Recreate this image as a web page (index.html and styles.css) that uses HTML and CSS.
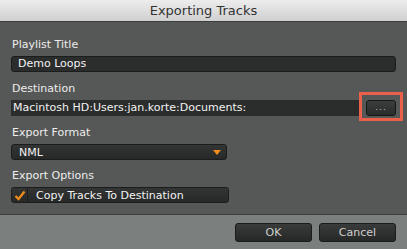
FILE: index.html
```html
<!DOCTYPE html>
<html lang="en">
<head>
  <meta charset="UTF-8">
  <title>Exporting Tracks</title>
  <link rel="stylesheet" href="styles.css">
</head>
<body>
  <div class="dialog">
    <div class="titlebar">Exporting Tracks</div>
    <div class="content">
      <div class="label first">Playlist Title</div>
      <div class="field rounded">Demo Loops</div>

      <div class="label">Destination</div>
      <div class="dest-row">
        <div class="field flat">Macintosh HD:Users:jan.korte:Documents:</div>
        <div class="browse">...</div>
        <div class="highlight"></div>
      </div>

      <div class="label">Export Format</div>
      <div class="select">
        <span>NML</span>
        <span class="arrow"></span>
      </div>

      <div class="label last">Export Options</div>
      <div class="checkbox">
        <div class="box">
          <svg width="12" height="11" viewBox="0 0 12 11">
            <path d="M1.5 6 L4.5 9 L10.5 1.5" fill="none" stroke="#f28c1c" stroke-width="2.2"/>
          </svg>
        </div>
        <div class="check-label">Copy Tracks To Destination</div>
      </div>
    </div>
    <div class="footer">
      <div class="button">OK</div>
      <div class="button">Cancel</div>
    </div>
  </div>
</body>
</html>
```

FILE: styles.css
```css
body {
  margin: 0;
  padding: 0;
  width: 407px;
  height: 249px;
  overflow: hidden;
  font-family: 'DejaVu Sans', sans-serif;
  background: #565857;
}
.dialog {
  display: flex;
  flex-direction: column;
  height: 249px;
}
.titlebar {
  height: 21px;
  line-height: 21px;
  text-align: center;
  font-size: 13px;
  color: #333;
  background: linear-gradient(to bottom, #ededed, #d0d0d0);
  border-bottom: 1px solid #3b3d3c;
}
.content {
  flex: 1;
  display: flex;
  flex-direction: column;
  padding: 0 11px;
  background: #565857;
  border-bottom: 1px solid #3c3e3d;
}
.label {
  font-size: 11px;
  color: #ededed;
  margin: 10px 0 4px 1px;
  height: 14px;
  line-height: 14px;
  flex-shrink: 0;
}
.label.first {
  margin-top: 16px;
}
.label.last {
  margin-top: 9px;
}
.field {
  height: 16px;
  line-height: 16px;
  font-size: 11px;
  color: #f2f2f2;
  background: #2b2d2c;
  padding-left: 6px;
  box-sizing: border-box;
  flex-shrink: 0;
}
.rounded {
  border: 1px solid #1b1c1c;
  border-radius: 3px;
  line-height: 14px;
}
.dest-row {
  position: relative;
  display: flex;
  align-items: center;
}
.dest-row .field {
  width: 348px;
  padding-left: 2px;
}
.browse {
  margin-left: 7px;
  width: 31px;
  height: 16px;
  box-sizing: border-box;
  border: 1px solid #151616;
  border-radius: 3px;
  background: linear-gradient(to bottom, #3b3d3c, #2a2b2b);
  color: #bdbdbd;
  font-size: 9px;
  text-align: center;
  line-height: 12px;
  letter-spacing: 1px;
}
.highlight {
  position: absolute;
  left: 348px;
  top: -8px;
  width: 44px;
  height: 29px;
  box-sizing: border-box;
  border: 3px solid #ec5f4b;
}
.select, .checkbox {
  height: 16px;
  box-sizing: border-box;
  border: 1px solid #1b1c1c;
  border-radius: 3px;
  background: linear-gradient(to bottom, #333534, #272928);
  flex-shrink: 0;
}
.select {
  width: 216px;
  display: flex;
  justify-content: space-between;
  align-items: center;
  padding: 0 5px 0 7px;
  font-size: 11px;
  color: #f2f2f2;
}
.arrow {
  width: 0;
  height: 0;
  border-left: 4px solid transparent;
  border-right: 4px solid transparent;
  border-top: 5px solid #f28c1c;
}
.checkbox {
  width: 218px;
  display: flex;
  align-items: center;
}
.box {
  width: 15px;
  height: 14px;
  border-right: 1px solid #1b1c1c;
  display: flex;
  align-items: center;
  justify-content: center;
}
.check-label {
  padding-left: 8px;
  font-size: 11px;
  color: #f2f2f2;
}
.footer {
  height: 34px;
  flex-shrink: 0;
  background: #7b7f7e;
  display: flex;
  justify-content: flex-end;
  align-items: flex-start;
  gap: 7px;
  padding: 8px 11px 0 0;
  box-sizing: border-box;
}
.button {
  width: 77px;
  height: 19px;
  box-sizing: border-box;
  border: 1px solid #1a1b1b;
  border-radius: 3px;
  background: linear-gradient(to bottom, #3a3c3b, #262827);
  color: #cfcfcf;
  font-size: 11px;
  text-align: center;
  line-height: 17px;
}
```
